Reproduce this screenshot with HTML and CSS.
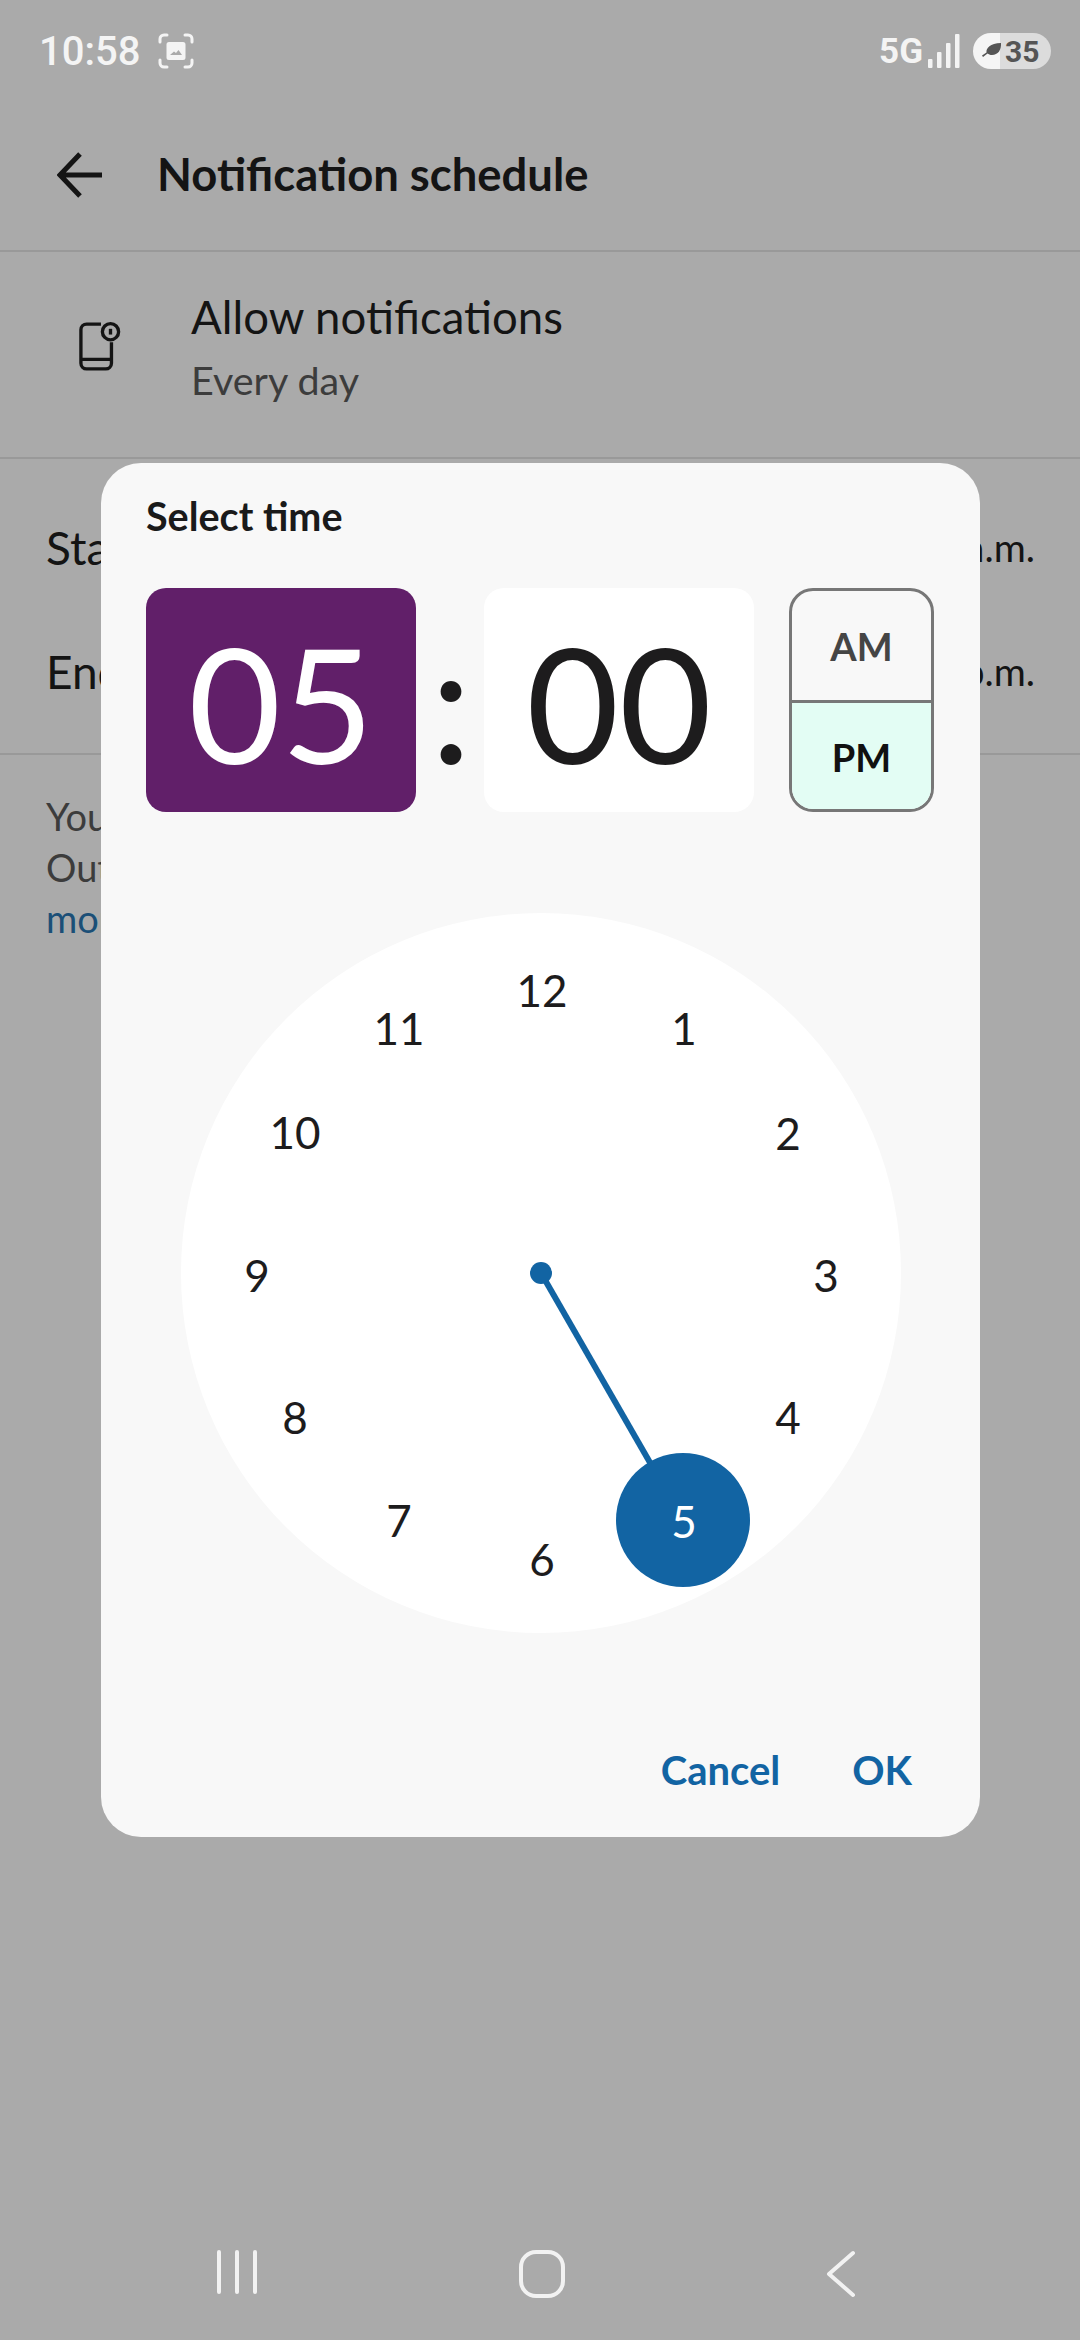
FILE: index.html
```html
<!DOCTYPE html>
<html lang="en">
<head>
  <meta charset="UTF-8" />
  <meta name="viewport" content="width=device-width, initial-scale=1.0" />
  <title>Notification schedule</title>
  <link rel="stylesheet" href="styles.css">
</head>
<body>
  <div class="status-bar">
    <div class="status-left">
      <span class="clock-text">10:58</span>
      <svg class="shot-icon" width="36" height="36" viewBox="0 0 36 36">
        <path d="M2 9V6a4 4 0 0 1 4-4h3M27 2h3a4 4 0 0 1 4 4v3M34 27v3a4 4 0 0 1-4 4h-3M9 34H6a4 4 0 0 1-4-4v-3" fill="none" stroke="#f4f4f4" stroke-width="3" stroke-linecap="round"/>
        <path fill-rule="evenodd" d="M11 9h14a2.500 2.500 0 0 1 2.500 2.500v13a2.500 2.500 0 0 1-2.500 2.500H11a2.500 2.500 0 0 1-2.500-2.500v-13A2.500 2.500 0 0 1 11 9zM12 22h12l-3.500-5-2.500 3-2-1.500z" fill="#f4f4f4"/>
      </svg>
    </div>
    <div class="status-right">
      <span class="net">5G</span>
      <svg class="signal" width="32" height="34" viewBox="0 0 32 34">
        <rect x="0" y="25" width="4.500" height="9" rx="1" fill="#f4f4f4"/>
        <rect x="9" y="18" width="4.500" height="16" rx="1" fill="#f4f4f4"/>
        <rect x="18" y="9" width="4.500" height="25" rx="1" fill="#f4f4f4"/>
        <rect x="27" y="0" width="4.500" height="34" rx="1" fill="#f4f4f4"/>
      </svg>
      <div class="battery">
        <svg class="leaf" width="20" height="16" viewBox="0 0 20 16">
          <path d="M19 0c.5 7-3 12-9 12-2 0-3.500-.6-4.500-1.500L1 14l-1-1.500 4.500-3C4 5 8 .5 19 0z" fill="#555"/>
        </svg>
        <span>35</span>
      </div>
    </div>
  </div>

  <header class="app-bar">
    <svg width="46" height="46" viewBox="0 0 46 46">
      <path d="M45 23H4M23 2L3 23l20 21" fill="none" stroke="#141414" stroke-width="5"/>
    </svg>
    <h1>Notification schedule</h1>
  </header>

  <div class="allow-row">
    <svg class="phone-icon" width="42" height="50" viewBox="0 0 44 52">
      <path d="M23 3H8a6 6 0 0 0-6 6v35a6 6 0 0 0 6 6h20a6 6 0 0 0 6-6V22M2 40h32" fill="none" stroke="#141414" stroke-width="3.500"/>
      <circle cx="33" cy="11" r="8.500" fill="none" stroke="#141414" stroke-width="3.500"/>
      <path d="M33 8v6" stroke="#141414" stroke-width="3.500"/>
    </svg>
    <div>
      <div class="allow-title">Allow notifications</div>
      <div class="allow-sub">Every day</div>
    </div>
  </div>

  <div class="times">
    <div class="time-row"><span>Start time</span><span class="time-value">10:00 a.m.</span></div>
    <div class="time-row"><span>End time</span><span class="time-value">5:00 p.m.</span></div>
  </div>

  <p class="note">You won't get notifications then.<br>Outside of it they stay quiet.<br><a href="#">more</a></p>

  <nav class="nav-bar">
    <svg width="44" height="44" viewBox="0 0 44 44">
      <path d="M4 2v40M22 2v40M40 2v40" fill="none" stroke="#f2f2f2" stroke-width="4" stroke-linecap="round"/>
    </svg>
    <svg width="46" height="48" viewBox="0 0 46 48">
      <rect x="2" y="2" width="42" height="44" rx="15" fill="none" stroke="#f2f2f2" stroke-width="4"/>
    </svg>
    <svg width="32" height="48" viewBox="0 0 32 48">
      <path d="M28 3L4 24l24 21" fill="none" stroke="#f2f2f2" stroke-width="4" stroke-linecap="round" stroke-linejoin="round"/>
    </svg>
  </nav>

  <div class="dialog">
    <div class="dialog-title">Select time</div>

    <div class="time-fields">
      <div class="field field-on">05</div>
      <div class="colon">:</div>
      <div class="field">00</div>
      <div class="ampm">
        <div class="am">AM</div>
        <div class="pm">PM</div>
      </div>
    </div>

    <svg class="dial" width="720" height="720" viewBox="-360 -360 720 720">
      <circle r="360" fill="#fff"/>
      <line x1="0" y1="0" x2="142" y2="247" stroke="#1264a3" stroke-width="6"/>
      <circle r="11" fill="#1264a3"/>
      <circle cx="142" cy="247" r="67" fill="#1264a3"/>
      <g class="dial-nums">
        <text x="1" y="-283">12</text>
        <text x="143" y="-245">1</text>
        <text x="247" y="-140">2</text>
        <text x="285" y="2">3</text>
        <text x="247" y="144">4</text>
        <text x="143" y="248" class="num-on">5</text>
        <text x="1" y="286">6</text>
        <text x="-142" y="247">7</text>
        <text x="-246" y="144">8</text>
        <text x="-284" y="2">9</text>
        <text x="-246" y="-141">10</text>
        <text x="-142" y="-245">11</text>
      </g>
    </svg>

    <div class="actions">
      <a href="#">Cancel</a>
      <a href="#">OK</a>
    </div>
  </div>
</body>
</html>
```

FILE: styles.css
```css
body {
  font-family: 'Lato', sans-serif;
  margin: 0;
  width: 1080px;
  height: 2340px;
  background-color: #aaaaaa;
  color: #141414;
  position: relative;
  overflow: hidden;
  display: flex;
  flex-direction: column;
}

.status-bar {
  height: 102px;
  padding: 0 29px 0 39px;
  display: flex;
  justify-content: space-between;
  align-items: center;
  color: #f4f4f4;
  font-family: 'Roboto', sans-serif;
  box-sizing: border-box;
}

.status-left,
.status-right {
  display: flex;
  align-items: center;
}

.clock-text {
  font-size: 40px;
  font-weight: 500;
}

.shot-icon {
  margin-left: 18px;
}

.net {
  font-size: 35px;
  font-weight: 700;
}

.signal {
  margin-left: 5px;
}

.battery {
  margin-left: 13px;
  width: 78px;
  height: 36px;
  border-radius: 18px;
  background: linear-gradient(to right, #f5f5f5 35%, #dcdcdc 35%);
  color: #555;
  font-size: 30px;
  font-weight: 700;
  display: flex;
  align-items: center;
  padding-left: 9px;
  box-sizing: border-box;
}

.leaf {
  margin-right: 3px;
}

.app-bar {
  height: 150px;
  padding: 0 0 3px 57px;
  display: flex;
  align-items: center;
  gap: 54px;
  border-bottom: 2px solid #999;
  box-sizing: border-box;
}

.app-bar h1 {
  margin: 0 0 3px;
  font-size: 45.400px;
  font-weight: 700;
}

.allow-row {
  height: 207px;
  padding: 0 0 18px 79px;
  display: flex;
  align-items: center;
  gap: 70px;
  border-bottom: 2px solid #999;
  box-sizing: border-box;
}

.allow-title {
  font-size: 45.500px;
}

.allow-sub {
  margin-top: 12px;
  font-size: 39.500px;
  color: #3c3c3c;
}

.times {
  height: 296px;
  padding: 26px 45px 0 46px;
  border-bottom: 2px solid #999;
  box-sizing: border-box;
}

.time-row {
  height: 124px;
  display: flex;
  justify-content: space-between;
  align-items: center;
  font-size: 46px;
}

.time-value {
  font-size: 39px;
}

.note {
  margin: 36px 0 0;
  padding: 0 46px;
  font-size: 38px;
  line-height: 51px;
  color: #3c3c3c;
}

.note a {
  color: #1b4f77;
  text-decoration: none;
}

.nav-bar {
  margin-top: auto;
  height: 90px;
  padding: 0 223px 0 215px;
  display: flex;
  justify-content: space-between;
  align-items: flex-start;
}

.dialog {
  position: absolute;
  left: 101px;
  top: 463px;
  width: 879px;
  height: 1374px;
  padding: 28px 45px 0;
  background: #f8f8f8;
  border-radius: 40px;
  box-sizing: border-box;
}

.dialog-title {
  font-size: 39.500px;
  font-weight: 700;
  line-height: 50px;
  color: #1a1a1a;
}

.time-fields {
  margin-top: 47px;
  display: flex;
  height: 224px;
}

.field {
  width: 270px;
  background: #fff;
  border-radius: 20px;
  font-size: 160px;
  line-height: 228px;
  text-align: center;
  color: #1d1c1d;
}

.field-on {
  background: #611f69;
  color: #fff;
}

.colon {
  width: 70px;
  margin-right: -2px;
  font-size: 166px;
  line-height: 223px;
  text-align: center;
  color: #1d1c1d;
}

.ampm {
  margin-left: 35px;
  width: 145px;
  border: 3px solid #777;
  border-radius: 24px;
  box-sizing: border-box;
  overflow: hidden;
  display: flex;
  flex-direction: column;
  font-size: 38px;
  font-weight: 700;
  text-align: center;
}

.am {
  height: 109px;
  line-height: 110px;
  color: #454545;
  border-bottom: 3px solid #777;
}

.pm {
  flex: 1;
  line-height: 109px;
  background: #e3fdf4;
  color: #111;
}

.dial {
  display: block;
  margin: 101px auto 0;
}

.dial-nums text {
  font-size: 44px;
  fill: #1d1c1d;
  text-anchor: middle;
  dominant-baseline: central;
}

.dial-nums .num-on {
  fill: #fff;
}

.actions {
  margin-top: 112px;
  padding-right: 23px;
  display: flex;
  justify-content: flex-end;
  gap: 72px;
}

.actions a {
  font-size: 40px;
  font-weight: 700;
  line-height: 50px;
  color: #1264a3;
  text-decoration: none;
}
```
